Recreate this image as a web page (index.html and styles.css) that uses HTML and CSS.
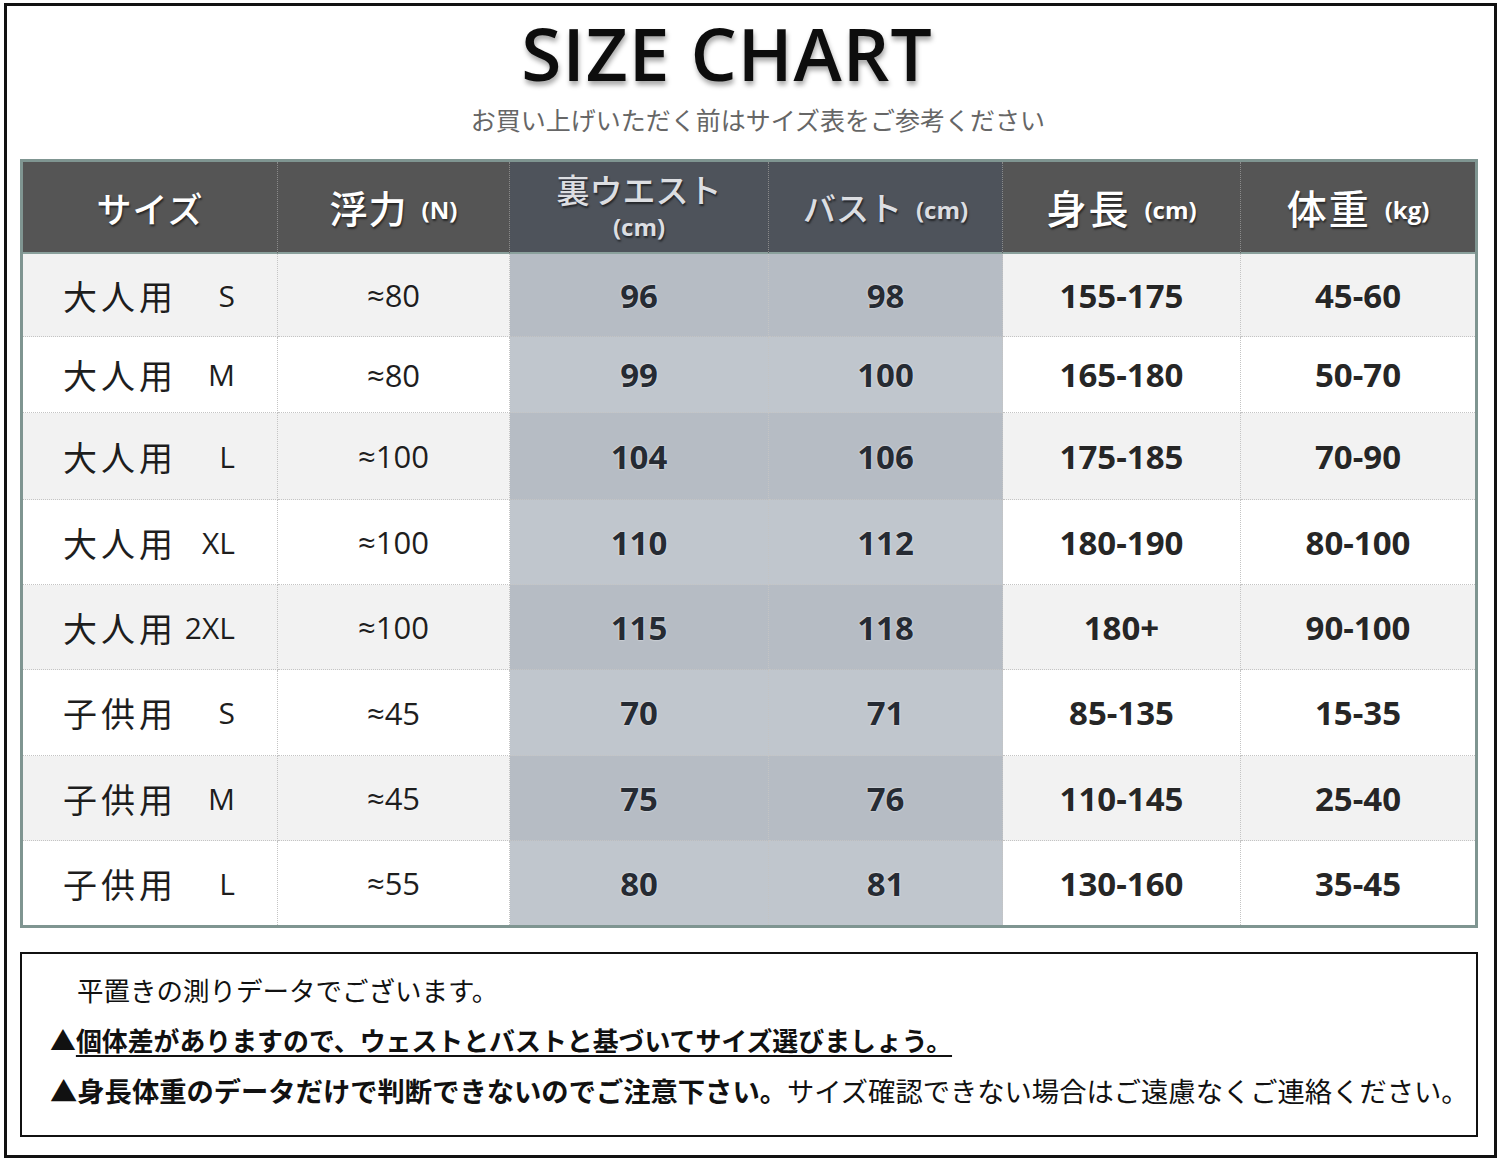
FILE: index.html
```html
<!DOCTYPE html>
<html lang="ja">
<head>
<meta charset="utf-8">
<title>SIZE CHART</title>
<link rel="stylesheet" href="styles.css">
</head>
<body>
<div class="frame">
  <header class="head">
    <h1 class="title">SIZE CHART</h1>
    <p class="subtitle">お買い上げいただく前はサイズ表をご参考ください</p>
  </header>

  <div class="chart">
    <div class="cell hd"><span class="hj h36">サイズ</span></div>
    <div class="cell hd"><span class="hj h37">浮力</span><span class="unit">(N)</span></div>
    <div class="cell hd hl stack"><span class="hj h33 l1">裏ウエスト</span><span class="unit l2">(cm)</span></div>
    <div class="cell hd hl"><span class="hj h33">バスト</span><span class="unit">(cm)</span></div>
    <div class="cell hd"><span class="hj h40">身長</span><span class="unit">(cm)</span></div>
    <div class="cell hd last"><span class="hj h40">体重</span><span class="unit">(kg)</span></div>

    <div class="cell c1 odd"><span class="kind">大人用</span><span class="sz">S</span></div>
    <div class="cell c2 odd">≈80</div>
    <div class="cell num hi odd">96</div>
    <div class="cell num hi odd">98</div>
    <div class="cell num odd">155-175</div>
    <div class="cell num odd last">45-60</div>

    <div class="cell c1"><span class="kind">大人用</span><span class="sz">M</span></div>
    <div class="cell c2">≈80</div>
    <div class="cell num hi">99</div>
    <div class="cell num hi">100</div>
    <div class="cell num">165-180</div>
    <div class="cell num last">50-70</div>

    <div class="cell c1 odd"><span class="kind">大人用</span><span class="sz">L</span></div>
    <div class="cell c2 odd">≈100</div>
    <div class="cell num hi odd">104</div>
    <div class="cell num hi odd">106</div>
    <div class="cell num odd">175-185</div>
    <div class="cell num odd last">70-90</div>

    <div class="cell c1"><span class="kind">大人用</span><span class="sz">XL</span></div>
    <div class="cell c2">≈100</div>
    <div class="cell num hi">110</div>
    <div class="cell num hi">112</div>
    <div class="cell num">180-190</div>
    <div class="cell num last">80-100</div>

    <div class="cell c1 odd"><span class="kind">大人用</span><span class="sz">2XL</span></div>
    <div class="cell c2 odd">≈100</div>
    <div class="cell num hi odd">115</div>
    <div class="cell num hi odd">118</div>
    <div class="cell num odd">180+</div>
    <div class="cell num odd last">90-100</div>

    <div class="cell c1"><span class="kind">子供用</span><span class="sz">S</span></div>
    <div class="cell c2">≈45</div>
    <div class="cell num hi">70</div>
    <div class="cell num hi">71</div>
    <div class="cell num">85-135</div>
    <div class="cell num last">15-35</div>

    <div class="cell c1 odd"><span class="kind">子供用</span><span class="sz">M</span></div>
    <div class="cell c2 odd">≈45</div>
    <div class="cell num hi odd">75</div>
    <div class="cell num hi odd">76</div>
    <div class="cell num odd">110-145</div>
    <div class="cell num odd last">25-40</div>

    <div class="cell c1 bottom"><span class="kind">子供用</span><span class="sz">L</span></div>
    <div class="cell c2 bottom">≈55</div>
    <div class="cell num hi bottom">80</div>
    <div class="cell num hi bottom">81</div>
    <div class="cell num bottom">130-160</div>
    <div class="cell num bottom last">35-45</div>
  </div>

  <div class="notes">
    <p class="note first">平置きの測りデータでございます。</p>
    <p class="note strong"><span class="tri">▲</span><span class="ul">個体差がありますので、ウェストとバストと基づいてサイズ選びましょう。</span></p>
    <p class="note wide"><span class="bold">▲身長体重のデータだけで判断できないのでご注意下さい。</span>サイズ確認できない場合はご遠慮なくご連絡ください。</p>
  </div>
</div>
</body>
</html>
```

FILE: styles.css
```css
* { box-sizing: border-box; }

html, body {
  margin: 0;
  padding: 0;
  background: #ffffff;
}

body {
  font-family: "Noto Sans CJK JP", "Noto Sans", sans-serif;
  color: #222;
}

.frame {
  width: 1493px;
  height: 1155px;
  margin: 3px 0 0 4px;
  border: 3px solid #111;
  padding: 0 16px 0 13px;
  display: flex;
  flex-direction: column;
}

.head {
  display: flex;
  flex-direction: column;
  align-items: stretch;
}

.title {
  margin: 7px 0 0;
  padding-right: 44px;
  height: 80px;
  font-family: "Open Sans", "Liberation Sans", sans-serif;
  font-weight: 600;
  font-size: 73px;
  letter-spacing: 1px;
  line-height: 80px;
  text-align: center;
  color: #0d0d0d;
  text-shadow: 1px 4px 5px rgba(0, 0, 0, 0.35);
}

.subtitle {
  margin: 8px 0 0;
  padding-left: 18px;
  height: 36px;
  font-family: "Noto Sans CJK JP", sans-serif;
  font-size: 25px;
  line-height: 36px;
  font-weight: 400;
  text-align: center;
  color: #666;
}

.chart {
  margin-top: 22px;
  display: grid;
  grid-template-columns: 255px 232px 259px 234px 238px 234px;
  grid-template-rows: 92px 83px 76px 87px 85px 85px 86px 85px 84px;
  border: 3px solid #7f9591;
  width: 1458px;
}

.cell {
  display: flex;
  align-items: center;
  justify-content: center;
  background: #ffffff;
  border-right: 1px dotted #c4c4c4;
  border-bottom: 1px dotted #c4c4c4;
  text-shadow: 0 0 2px rgba(255, 255, 255, 0.9);
}

.cell.odd { background: #f2f2f2; }
.cell.last { border-right: none; }
.cell.bottom { border-bottom: none; }

.cell.hi { background: #c0c6cd; }
.cell.hi.odd { background: #b6bcc4; }

/* header */
.cell.hd {
  background: #555555;
  color: #ffffff;
  border-right: 1px dotted #8a8a8a;
  border-bottom: 2px solid #8aa09c;
  gap: 14px;
  text-shadow: 1px 2px 2px rgba(0, 0, 0, 0.55);
}
.cell.hd.last { border-right: none; }
.cell.hd.hl {
  background: #4e535b;
  color: #dcdee2;
}
.cell.hd.stack {
  flex-direction: column;
  gap: 0;
  padding-bottom: 0;
}

.hj {
  font-family: "Noto Sans CJK JP", sans-serif;
  font-weight: 500;
  line-height: 1;
}
.h33 { font-size: 33px; }
.h36 { font-size: 35px; letter-spacing: 1px; }
.h37 { font-size: 38px; letter-spacing: 1px; }
.h40 { font-size: 40px; letter-spacing: 2px; }

.unit {
  font-family: "Open Sans", "Liberation Sans", sans-serif;
  font-weight: 700;
  font-size: 24px;
  line-height: 1;
  padding-top: 6px;
}
.stack .l1 { line-height: 40px; margin-top: -6px; }
.stack .l2 { line-height: 24px; padding-top: 0; margin-top: 6px; }

/* body */
.cell.c1 {
  justify-content: space-between;
  padding: 0 42px 0 40px;
  color: #1e1e1e;
}
.kind {
  font-family: "Noto Sans CJK JP", sans-serif;
  font-size: 34px;
  letter-spacing: 4px;
  font-weight: 400;
}
.sz {
  font-family: "Open Sans", "Liberation Sans", sans-serif;
  font-size: 30px;
  font-weight: 400;
}

.cell.c2 {
  font-family: "Open Sans", "DejaVu Sans", sans-serif;
  font-size: 31px;
  font-weight: 400;
  color: #1e1e1e;
}

.cell.num {
  font-family: "Open Sans", "Liberation Sans", sans-serif;
  font-size: 33px;
  font-weight: 700;
  color: #262626;
}
.cell.num.hi { color: #262b33; }

/* notes */
.notes {
  margin-top: 24px;
  width: 1458px;
  height: 185px;
  border: 2px solid #111;
  padding: 11px 20px 20px 28px;
}

.note {
  margin: 0;
  height: 50px;
  line-height: 50px;
  font-family: "Noto Sans CJK JP", sans-serif;
  font-size: 26.5px;
  color: #111;
  white-space: nowrap;
}
.note.first { padding-left: 27px; font-weight: 400; }
.note.strong { font-weight: 700; font-size: 25.9px; }
.note.wide { font-size: 27.3px; font-weight: 400; }
.ul {
  text-decoration: underline;
  text-decoration-thickness: 2px;
  text-underline-offset: 4px;
}
.bold { font-weight: 700; }
```
